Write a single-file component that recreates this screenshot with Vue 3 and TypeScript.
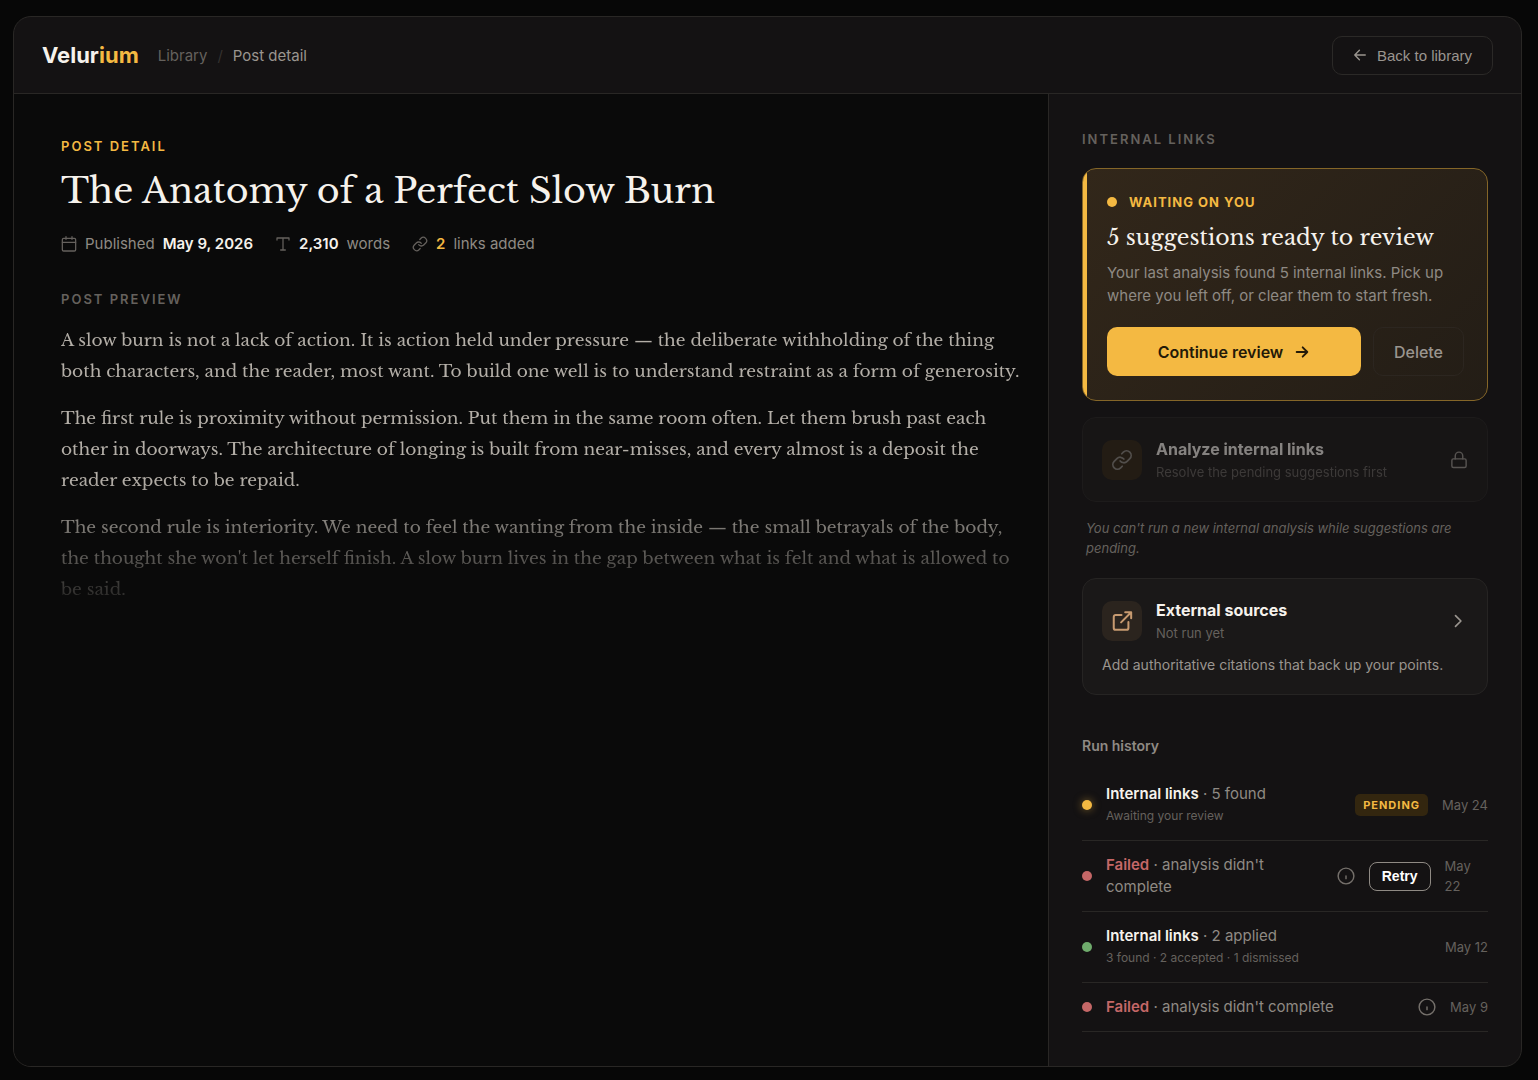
<script setup lang="ts">
interface Meta {
  icon: 'calendar' | 'type' | 'link'
  before?: string
  value: string
  after?: string
  accent?: boolean
}

interface Run {
  id: number
  status: 'pending' | 'failed' | 'done'
  title: string
  detail: string
  note?: string
  badge?: string
  info?: boolean
  retry?: boolean
  date: string
}

const meta: Meta[] = [
  { icon: 'calendar', before: 'Published', value: 'May 9, 2026' },
  { icon: 'type', value: '2,310', after: 'words' },
  { icon: 'link', value: '2', after: 'links added', accent: true },
]

const paragraphs: string[] = [
  'A slow burn is not a lack of action. It is action held under pressure — the deliberate withholding of the thing both characters, and the reader, most want. To build one well is to understand restraint as a form of generosity.',
  'The first rule is proximity without permission. Put them in the same room often. Let them brush past each other in doorways. The architecture of longing is built from near-misses, and every almost is a deposit the reader expects to be repaid.',
  "The second rule is interiority. We need to feel the wanting from the inside — the small betrayals of the body, the thought she won't let herself finish. A slow burn lives in the gap between what is felt and what is allowed to be said.",
]

const runs: Run[] = [
  { id: 1, status: 'pending', title: 'Internal links', detail: '5 found', note: 'Awaiting your review', badge: 'Pending', date: 'May 24' },
  { id: 2, status: 'failed', title: 'Failed', detail: "analysis didn't complete", info: true, retry: true, date: 'May 22' },
  { id: 3, status: 'done', title: 'Internal links', detail: '2 applied', note: '3 found · 2 accepted · 1 dismissed', date: 'May 12' },
  { id: 4, status: 'failed', title: 'Failed', detail: "analysis didn't complete", info: true, date: 'May 9' },
]
</script>

<template>
  <div class="frame">
    <header class="topbar">
      <div class="brand">Velur<span>ium</span></div>
      <nav class="crumbs" aria-label="Breadcrumb">
        <a href="#library">Library</a>
        <span class="slash">/</span>
        <span class="current">Post detail</span>
      </nav>
      <button type="button" class="back">
        <svg class="icon" width="14" height="14" viewBox="0 0 24 24" stroke-width="2.4">
          <path d="M21 12H3M11 4l-8 8 8 8" />
        </svg>
        Back to library
      </button>
    </header>

    <div class="columns">
      <main class="post">
        <p class="eyebrow">Post detail</p>
        <h1>The Anatomy of a Perfect Slow Burn</h1>
        <ul class="meta">
          <li v-for="item in meta" :key="item.icon">
            <svg class="icon" width="16" height="16" viewBox="0 0 24 24" stroke-width="1.9">
              <template v-if="item.icon === 'calendar'">
                <rect x="2" y="3.500" width="20" height="19" rx="2" />
                <path d="M2 9.500h20M7.500 1v4M16.500 1v4" />
              </template>
              <path v-else-if="item.icon === 'type'" d="M3 6V3h18v3M12 3v18M8.500 21h7" />
              <template v-else>
                <path d="M10 13a5 5 0 0 0 7.540.540l3-3a5 5 0 0 0-7.070-7.070l-1.720 1.710" />
                <path d="M14 11a5 5 0 0 0-7.540-.540l-3 3a5 5 0 0 0 7.070 7.070l1.710-1.710" />
              </template>
            </svg>
            <span v-if="item.before">{{ item.before }}</span>
            <strong :class="{ accent: item.accent }">{{ item.value }}</strong>
            <span v-if="item.after">{{ item.after }}</span>
          </li>
        </ul>

        <h2 class="label">Post preview</h2>
        <div class="preview">
          <p v-for="(text, i) in paragraphs" :key="i">{{ text }}</p>
        </div>
      </main>

      <aside class="side">
        <h2 class="label">Internal links</h2>

        <section class="waiting">
          <p class="status"><i></i>Waiting on you</p>
          <h3>5 suggestions ready to review</h3>
          <p class="copy">Your last analysis found 5 internal links. Pick up where you left off, or clear them to start fresh.</p>
          <div class="actions">
            <button type="button" class="primary">
              Continue review
              <svg class="icon" width="16" height="16" viewBox="0 0 24 24" stroke-width="2.8">
                <path d="M4 12h16M13 5l7 7-7 7" />
              </svg>
            </button>
            <button type="button" class="ghost">Delete</button>
          </div>
        </section>

        <button type="button" class="card locked" disabled>
          <span class="card-head">
            <span class="tile">
              <svg class="icon" width="22" height="22" viewBox="0 0 24 24" stroke-width="1.9">
                <path d="M10 13a5 5 0 0 0 7.540.540l3-3a5 5 0 0 0-7.070-7.070l-1.720 1.710" />
                <path d="M14 11a5 5 0 0 0-7.540-.540l-3 3a5 5 0 0 0 7.070 7.070l1.710-1.710" />
              </svg>
            </span>
            <span class="card-text">
              <span class="card-title">Analyze internal links</span>
              <span class="card-sub">Resolve the pending suggestions first</span>
            </span>
            <svg class="icon" width="18" height="18" viewBox="0 0 24 24" stroke-width="1.9">
              <rect x="2.500" y="10.500" width="19" height="11.500" rx="2" />
              <path d="M7 10.500V6.500a5 5 0 0 1 10 0v4" />
            </svg>
          </span>
        </button>
        <p class="hint">You can't run a new internal analysis while suggestions are pending.</p>

        <button type="button" class="card">
          <span class="card-head">
            <span class="tile warm">
              <svg class="icon" width="22" height="22" viewBox="0 0 24 24" stroke-width="2.2">
                <path d="M19 13v6.500a2 2 0 0 1-2 2H5a2 2 0 0 1-2-2v-12a2 2 0 0 1 2-2h6.500" />
                <path d="M15.500 2.500H22V9M22 2.500L11 13.500" />
              </svg>
            </span>
            <span class="card-text">
              <span class="card-title">External sources</span>
              <span class="card-sub">Not run yet</span>
            </span>
            <svg class="icon" width="20" height="20" viewBox="0 0 24 24" stroke-width="2">
              <path d="M9 5.500l6.500 6.500L9 18.500" />
            </svg>
          </span>
          <span class="card-copy">Add authoritative citations that back up your points.</span>
        </button>

        <h2 class="history-title">Run history</h2>
        <ul class="history">
          <li v-for="run in runs" :key="run.id" :class="run.status">
            <i class="dot"></i>
            <div class="run">
              <p><strong>{{ run.title }}</strong> · {{ run.detail }}</p>
              <p v-if="run.note" class="note">{{ run.note }}</p>
            </div>
            <span v-if="run.badge" class="badge">{{ run.badge }}</span>
            <svg v-if="run.info" class="icon info" width="18" height="18" viewBox="0 0 24 24" stroke-width="1.9">
              <circle cx="12" cy="12" r="10.500" />
              <path d="M12 12v3.500" />
            </svg>
            <button v-if="run.retry" type="button" class="retry">Retry</button>
            <time>{{ run.date }}</time>
          </li>
        </ul>
      </aside>
    </div>
  </div>
</template>

<style>
body {
  margin: 0;
  background: #070707;
}
</style>

<style scoped>
.frame {
  margin: 16px 16px 13px 13px;
  border: 1px solid #292725;
  border-radius: 18px;
  overflow: hidden;
  background: #141213;
  color: #8f8a84;
  font-family: Inter, "Liberation Sans", sans-serif;
  font-size: 15px;
  line-height: 22px;
}

h1, h2, h3, p, ul {
  margin: 0;
  padding: 0;
}

ul {
  list-style: none;
}

button {
  font-family: inherit;
  cursor: pointer;
}

.icon {
  flex: none;
  fill: none;
  stroke: currentColor;
  stroke-linecap: round;
  stroke-linejoin: round;
}

.topbar {
  display: flex;
  align-items: center;
  height: 76px;
  padding: 0 28px;
  border-bottom: 1px solid #292725;
}

.brand {
  color: #f6f2ec;
  font-size: 22px;
  font-weight: 700;
}

.brand span,
.accent {
  color: #f4b942;
}

.crumbs {
  display: flex;
  gap: 10px;
  margin-left: 19px;
  padding-top: 2px;
}

.crumbs a {
  color: #65615d;
  text-decoration: none;
}

.slash {
  color: #34312f;
}

.current {
  color: #9a958f;
}

.back {
  display: flex;
  align-items: center;
  gap: 10px;
  height: 39px;
  margin-left: auto;
  padding: 0 20px;
  border: 1px solid #2b2927;
  border-radius: 10px;
  background: transparent;
  color: #9a958f;
  font-family: "Liberation Sans", Arial, sans-serif;
  font-size: 15px;
}

.columns {
  display: flex;
}

.post {
  flex: 1;
  min-width: 0;
  padding: 41px 24px 41px 47px;
  background: #0a0a0a;
}

.side {
  box-sizing: border-box;
  flex: none;
  width: 473px;
  padding: 34px 33px;
  border-left: 1px solid #292725;
}

.eyebrow,
.label {
  font-size: 13px;
  font-weight: 600;
  letter-spacing: 2px;
  text-transform: uppercase;
}

.eyebrow {
  color: #f4b942;
}

h1,
h3,
.preview {
  font-family: "Libre Baskerville", "Liberation Serif", serif;
  font-weight: 400;
}

h1 {
  margin-top: 8px;
  color: #f6f2ec;
  font-size: 35px;
  line-height: 52px;
}

.meta {
  display: flex;
  flex-wrap: wrap;
  gap: 22px;
  margin-top: 16px;
}

.meta li {
  display: flex;
  align-items: center;
  gap: 8px;
}

.meta .icon {
  color: #65615d;
}

.meta strong {
  color: #f6f2ec;
  font-weight: 600;
}

.meta .accent {
  color: #f4b942;
}

.label {
  color: #65615d;
}

.post .label {
  margin-top: 33px;
}

.preview {
  margin-top: 15px;
  color: #b3aea7;
  font-size: 17px;
  line-height: 31px;
  -webkit-mask-image: linear-gradient(#000 55%, transparent 108%);
  mask-image: linear-gradient(#000 55%, transparent 108%);
}

.preview p + p {
  margin-top: 16px;
}

.waiting {
  position: relative;
  margin-top: 18px;
  padding: 22px 23px 24px 24px;
  border: 1px solid #856628;
  border-radius: 14px;
  overflow: hidden;
  background: linear-gradient(135deg, #32271a, #231d16);
}

.waiting::before {
  content: "";
  position: absolute;
  inset: 0 auto 0 0;
  width: 4px;
  background: #f4b942;
}

.status {
  display: flex;
  align-items: center;
  gap: 12px;
  color: #f4b942;
  font-size: 13px;
  font-weight: 700;
  letter-spacing: 1px;
  text-transform: uppercase;
}

.status i,
.dot {
  flex: none;
  width: 10px;
  height: 10px;
  border-radius: 50%;
  background: #f4b942;
}

h3 {
  margin-top: 9px;
  color: #f6f2ec;
  font-size: 22px;
  line-height: 32px;
}

.copy {
  margin-top: 7px;
  line-height: 23px;
}

.actions {
  display: flex;
  gap: 12px;
  margin-top: 20px;
}

.primary,
.ghost {
  display: flex;
  align-items: center;
  justify-content: center;
  gap: 11px;
  height: 49px;
  border-radius: 10px;
  font-size: 16px;
}

.primary {
  flex: 1;
  border: 0;
  background: #f4b942;
  color: #241a08;
  font-weight: 600;
}

.ghost {
  padding: 0 20px;
  border: 1px solid #2c2620;
  background: transparent;
  color: #9a958f;
  font-weight: 500;
}

.card {
  display: block;
  width: 100%;
  padding: 19px 19px 18px;
  border: 1px solid #262423;
  border-radius: 14px;
  background: #1a1818;
  color: #9a958f;
  text-align: left;
}

.locked {
  margin-top: 16px;
  opacity: 0.5;
}

.card-head {
  display: flex;
  align-items: center;
  gap: 14px;
}

.tile {
  display: flex;
  align-items: center;
  justify-content: center;
  width: 40px;
  height: 40px;
  border-radius: 10px;
  background: #322715;
  color: #8f8a84;
}

.warm {
  background: #2b241e;
  color: #c79a70;
}

.card-text {
  display: flex;
  flex: 1;
  flex-direction: column;
}

.card-title {
  color: #f6f2ec;
  font-size: 16px;
  font-weight: 700;
  line-height: 24px;
}

.card-sub {
  color: #65615d;
  font-size: 13px;
  line-height: 22px;
}

.card-copy {
  display: block;
  margin-top: 10px;
  font-size: 14px;
  line-height: 22px;
}

.hint {
  margin: 16px 4px 20px;
  color: #65615d;
  font-size: 13px;
  font-style: italic;
  line-height: 20px;
}

.history-title {
  margin-top: 40px;
  font-size: 14px;
  font-weight: 600;
}

.history {
  margin-top: 13px;
}

.history li {
  display: flex;
  align-items: center;
  gap: 14px;
  padding: 13px 0;
  border-bottom: 1px solid #292725;
}

.pending .dot {
  box-shadow: 0 0 8px #f4b94280;
}

.failed .dot {
  background: #c56767;
}

.done .dot {
  background: #6fab6c;
}

.run {
  flex: 1 1 auto;
}

.run strong {
  color: #f6f2ec;
  font-weight: 600;
}

.failed strong {
  color: #c56767;
}

.run .note {
  color: #65615d;
  font-size: 12px;
}

.badge {
  padding: 0 8px;
  border-radius: 5px;
  background: #33260f;
  color: #f4b942;
  font-size: 11px;
  font-weight: 700;
  letter-spacing: 1px;
  text-transform: uppercase;
}

.info {
  color: #75706b;
}

.retry {
  flex: none;
  height: 29px;
  padding: 0 12px;
  border: 1px solid #8f8a84;
  border-radius: 8px;
  background: transparent;
  color: #ffffff;
  font-family: "Liberation Sans", Arial, sans-serif;
  font-size: 14px;
  font-weight: 700;
}

time {
  color: #65615d;
  font-size: 13px;
  line-height: 20px;
}
</style>
